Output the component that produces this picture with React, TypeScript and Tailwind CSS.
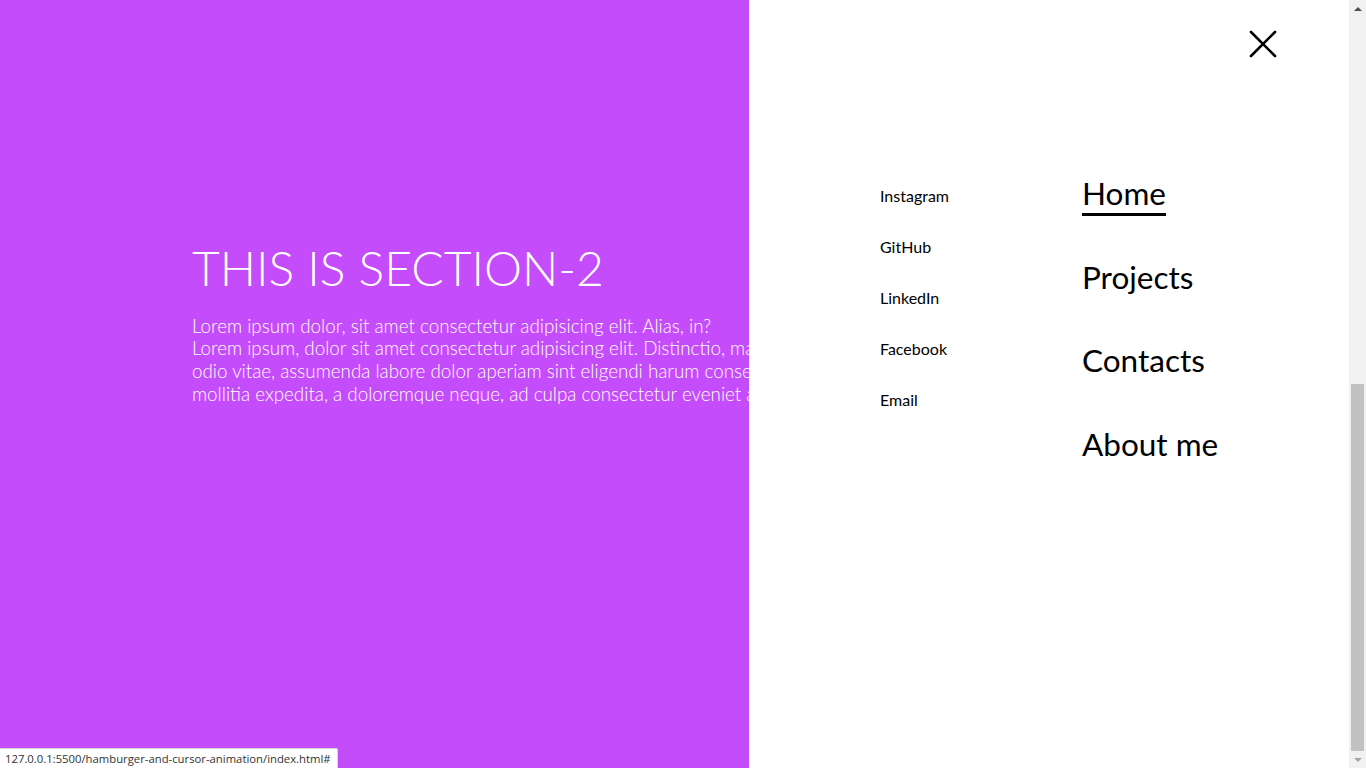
import React from "react";

const socials = ["Instagram", "GitHub", "LinkedIn", "Facebook", "Email"];
const pages = ["Home", "Projects", "Contacts", "About me"];

function CloseIcon() {
  return (
    <svg width="28" height="28" viewBox="0 0 28 28" fill="none" stroke="#000" strokeWidth="2.6" strokeLinecap="round">
      <line x1="2" y1="2" x2="26" y2="26" />
      <line x1="26" y1="2" x2="2" y2="26" />
    </svg>
  );
}

function Scrollbar() {
  return (
    <div className="w-[17px] h-[768px] bg-[#f1f1f1] flex flex-col items-center">
      <div className="h-[17px] flex items-center justify-center">
        <div className="w-0 h-0 border-l-[4px] border-r-[4px] border-b-[4px] border-l-transparent border-r-transparent border-b-[#505050]" />
      </div>
      <div className="flex-1 w-full px-[2px] pt-[367px]">
        <div className="h-full bg-[#c1c1c1]" />
      </div>
      <div className="h-[17px] flex items-center justify-center">
        <div className="w-0 h-0 border-l-[4px] border-r-[4px] border-t-[4px] border-l-transparent border-r-transparent border-t-[#a3a3a3]" />
      </div>
    </div>
  );
}

export default function App() {
  return (
    <div className="flex w-[1366px] h-[768px] overflow-hidden font-['Lato',sans-serif]">
      {/* page */}
      <div className="relative flex-1 h-full bg-[#c54cfb] overflow-hidden">
        <section className="w-[749px] overflow-hidden pl-[192px] pt-[239px] text-white font-light whitespace-nowrap">
          <h1 className="text-[48px] leading-[1.2]">THIS IS SECTION-2</h1>
          <p className="mt-[18px] text-[18.8px] leading-[22.8px]">
            Lorem ipsum dolor, sit amet consectetur adipisicing elit. Alias, in?
            <br />
            Lorem ipsum, dolor sit amet consectetur adipisicing elit. Distinctio, magnam quae dolorum
            <br />
            odio vitae, assumenda labore dolor aperiam sint eligendi harum consequatur aut fugit
            <br />
            mollitia expedita, a doloremque neque, ad culpa consectetur eveniet atque.
          </p>
        </section>

        {/* menu overlay */}
        <div className="absolute top-0 right-0 w-[600px] h-full bg-white text-black">
          <div className="flex justify-end pt-[30px] pr-[72px]">
            <CloseIcon />
          </div>
          <div className="flex pt-[113px] pl-[131px]">
            <ul className="flex flex-col gap-[32px] w-[202px] pt-[15px] text-[16px] leading-[19px]">
              {socials.map((s) => (
                <li key={s}>{s}</li>
              ))}
            </ul>
            <ul className="flex flex-col gap-[41.5px] pt-[1px] text-[31.5px] leading-[42px]">
              {pages.map((p, i) => (
                <li key={p}>
                  <span className={i === 0 ? "underline decoration-[2.5px] underline-offset-[8px]" : ""}>{p}</span>
                </li>
              ))}
            </ul>
          </div>
        </div>

        {/* browser status bubble */}
        <div className="absolute left-0 bottom-0 h-[20px] pl-[5px] pr-[6px] bg-white border-t border-r border-[#d6d6d6] rounded-tr-[2px] text-[11.3px] leading-[19px] text-[#333] font-['Open_Sans',sans-serif]">
          127.0.0.1:5500/hamburger-and-cursor-animation/index.html#
        </div>
      </div>
      <Scrollbar />
    </div>
  );
}
